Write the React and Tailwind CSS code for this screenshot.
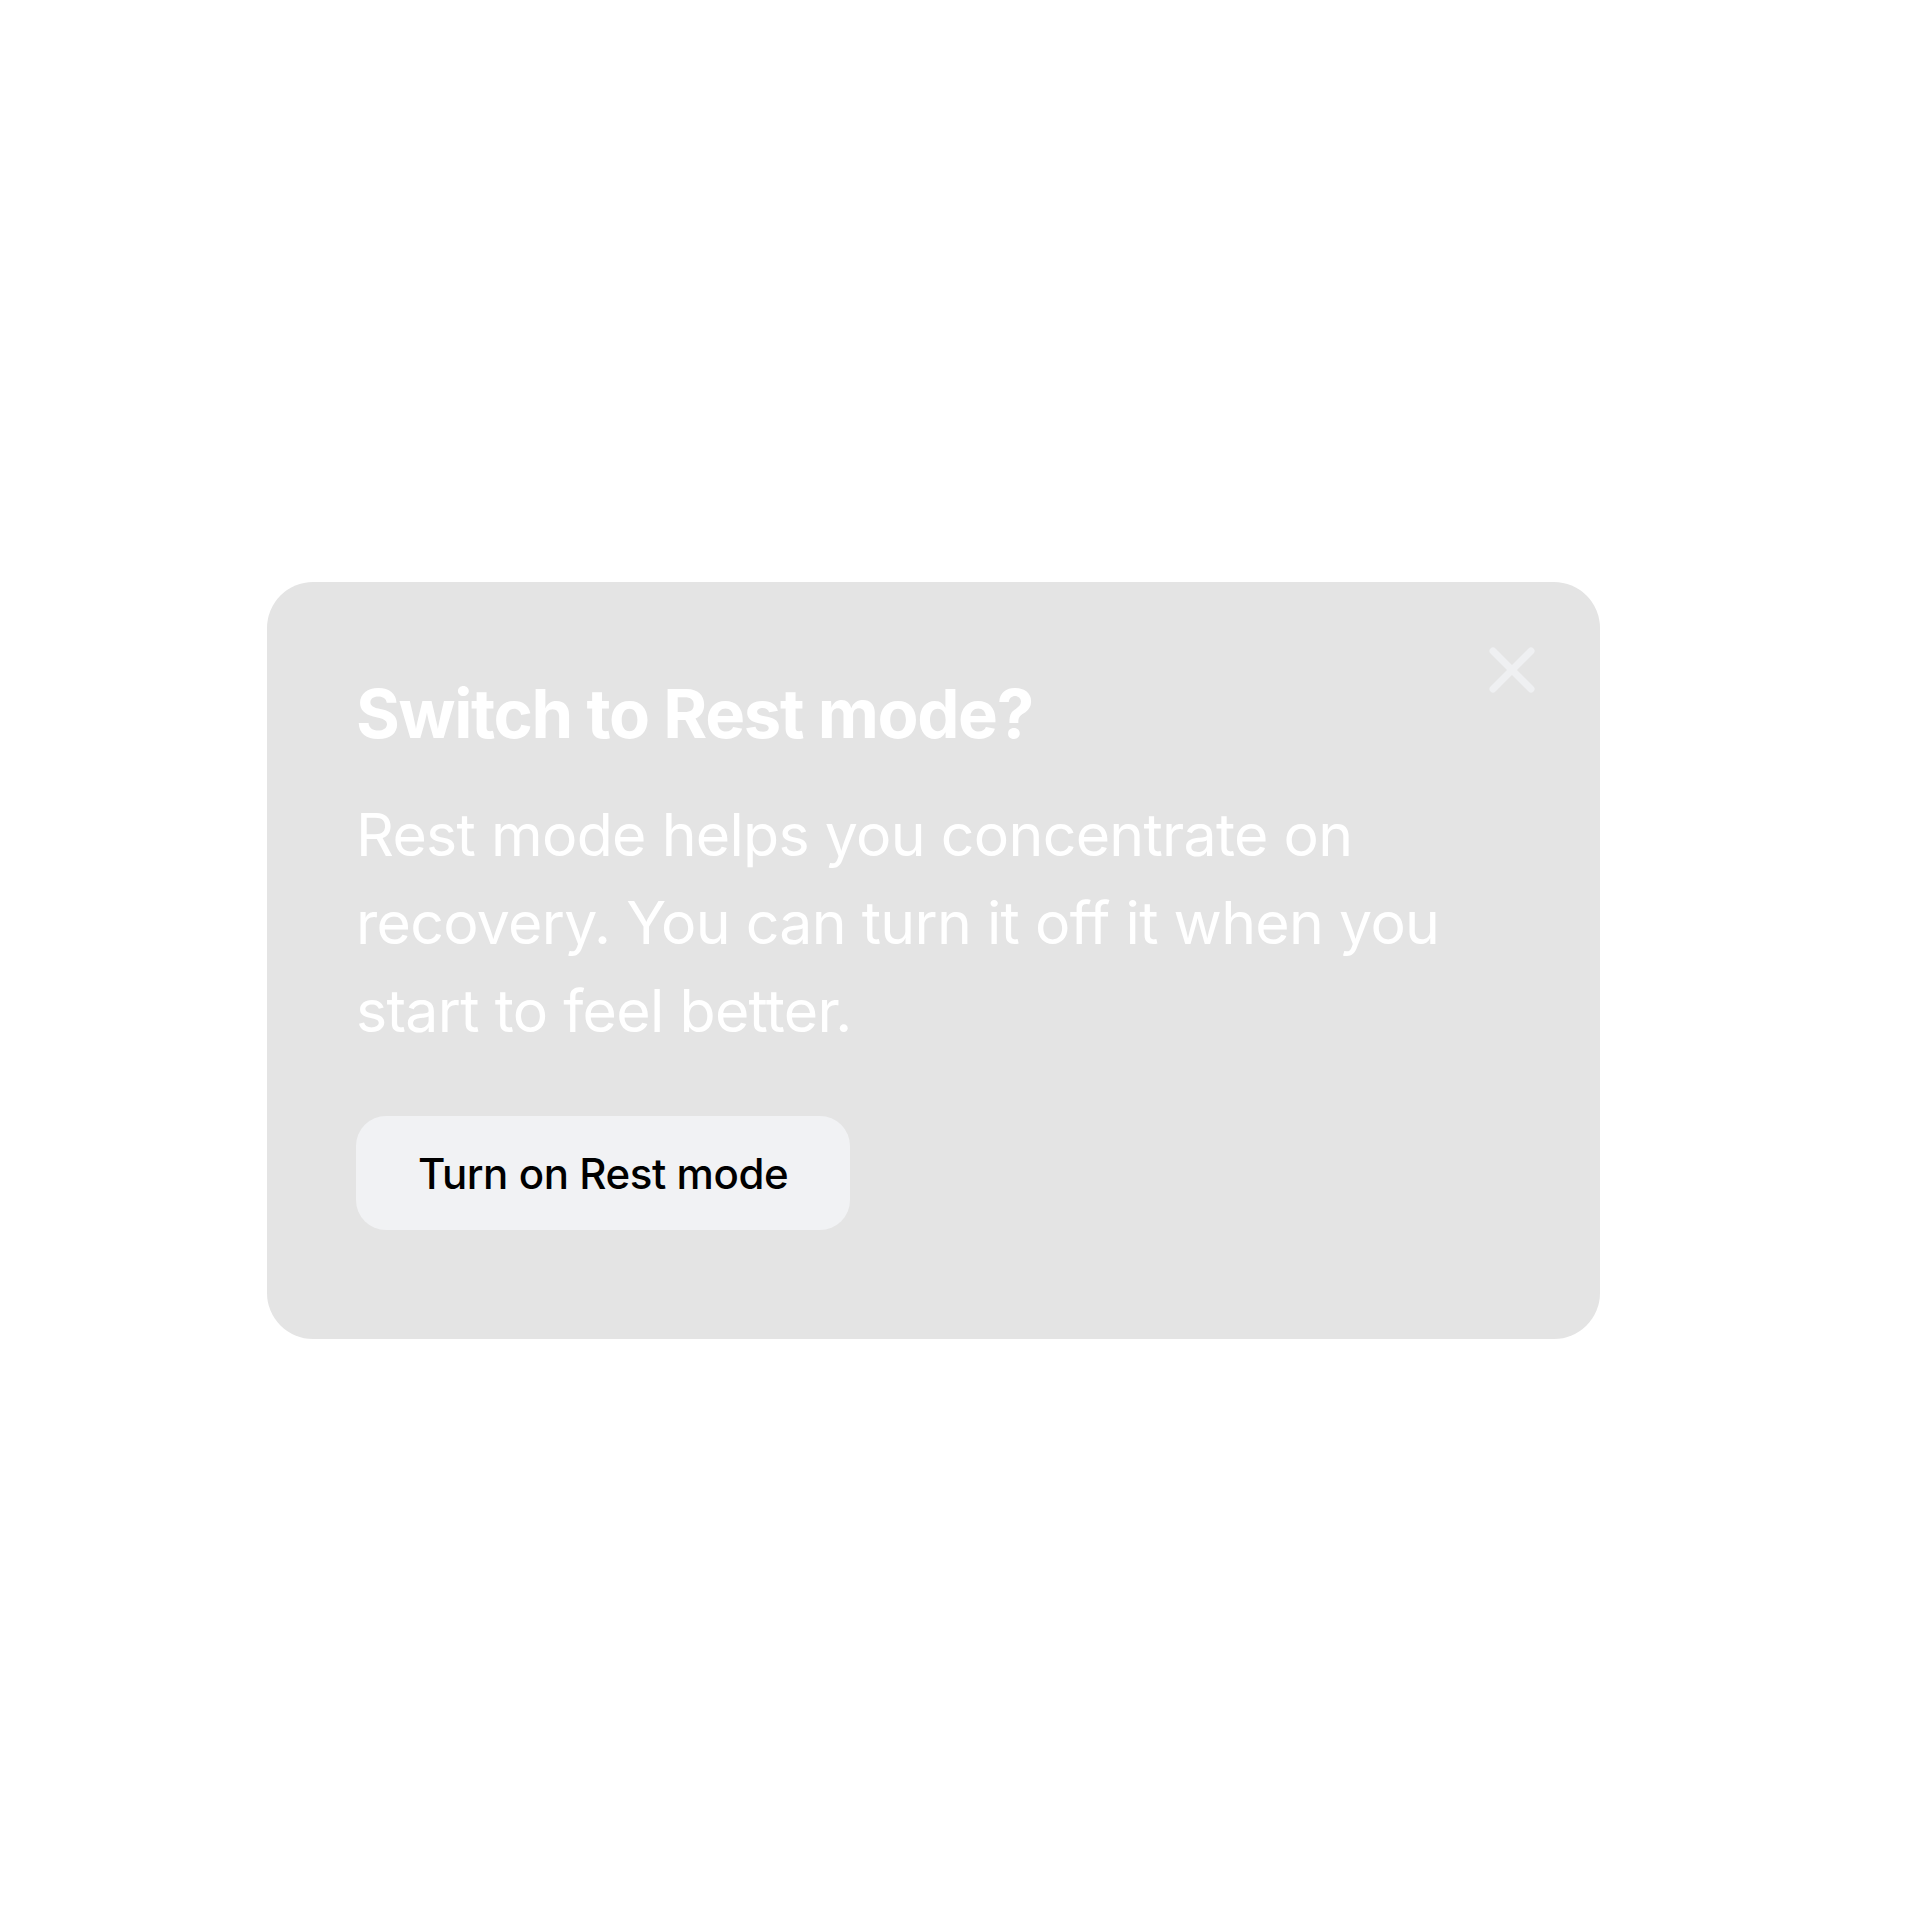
import React from 'react';

const CloseIcon = () => (
  <svg width="46" height="46" viewBox="0 0 46 46" fill="none">
    <path d="M4 4L42 42M42 4L4 42" stroke="#eff0f2" strokeWidth="7" strokeLinecap="round" />
  </svg>
);

const RestModePrompt = () => {
  return (
    <div className="relative w-[1333px] h-[757px] rounded-[46px] bg-[#e4e4e4] pl-[89px] pt-[92px]">
      <button className="absolute top-[65px] right-[65px]">
        <CloseIcon />
      </button>
      <h2 className="text-[67px] leading-[80px] font-bold tracking-[-0.02em] text-white">
        Switch to Rest mode?
      </h2>
      <p className="mt-[37px] max-w-[1120px] text-[59px] leading-[88px] tracking-[-0.012em] text-white">
        Rest mode helps you concentrate on recovery. You can turn it off it when you start to feel better.
      </p>
      <button className="mt-[61px] h-[114px] px-[62px] rounded-[30px] bg-[#f1f2f4] text-[42px] font-medium tracking-[-0.01em] text-black">
        Turn on Rest mode
      </button>
    </div>
  );
};

export default function App() {
  return (
    <div className="min-h-[1920px] bg-white pl-[267px] pt-[582px]" style={{ fontFamily: 'Inter, "Liberation Sans", sans-serif' }}>
      <RestModePrompt />
    </div>
  );
}
